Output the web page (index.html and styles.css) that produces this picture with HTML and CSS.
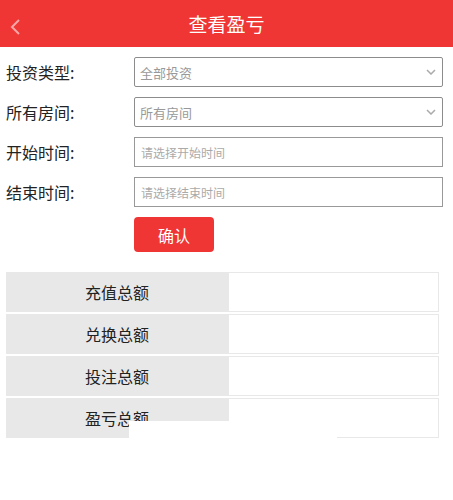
FILE: index.html
```html
<!DOCTYPE html>
<html lang="zh-CN">
<head>
  <meta charset="UTF-8">
  <meta name="viewport" content="width=device-width, initial-scale=1.0">
  <title>查看盈亏</title>
  <link rel="stylesheet" href="styles.css">
</head>
<body>

  <div class="header">
    <a class="back" href="#">
      <svg width="12" height="16" viewBox="0 0 12 16"><path d="M10 1 L3 8 L10 15" fill="none" stroke="#f7a6a6" stroke-width="2"/></svg>
    </a>
    <h1>查看盈亏</h1>
  </div>

  <form class="query-form">
    <div class="form-row">
      <label>投资类型:</label>
      <div class="select-box">
        <select>
          <option>全部投资</option>
        </select>
        <svg class="arrow" width="10" height="6" viewBox="0 0 10 6"><path d="M1 1 L5 5 L9 1" fill="none" stroke="#aaa" stroke-width="1.5"/></svg>
      </div>
    </div>
    <div class="form-row">
      <label>所有房间:</label>
      <div class="select-box">
        <select>
          <option>所有房间</option>
        </select>
        <svg class="arrow" width="10" height="6" viewBox="0 0 10 6"><path d="M1 1 L5 5 L9 1" fill="none" stroke="#aaa" stroke-width="1.5"/></svg>
      </div>
    </div>
    <div class="form-row">
      <label>开始时间:</label>
      <input type="text" placeholder="请选择开始时间">
    </div>
    <div class="form-row">
      <label>结束时间:</label>
      <input type="text" placeholder="请选择结束时间">
    </div>
    <div class="form-row btn-row">
      <label></label>
      <button type="button" class="btn-ok">确认</button>
    </div>
  </form>

  <table class="summary">
    <tr><td class="name">充值总额</td><td class="value"></td></tr>
    <tr><td class="name">兑换总额</td><td class="value"></td></tr>
    <tr><td class="name">投注总额</td><td class="value"></td></tr>
    <tr><td class="name">盈亏总额</td><td class="value"></td></tr>
  </table>

  <div class="cover"></div>

</body>
</html>
```

FILE: styles.css
```css
body {
  font-family: "Noto Sans CJK SC", "Liberation Sans", sans-serif;
  margin: 0;
  padding: 0;
  background-color: #fff;
  color: #222;
  position: relative;
  min-height: 500px;
}
.header {
  height: 47px;
  background-color: #f03535;
  display: flex;
  align-items: center;
  justify-content: center;
  position: relative;
}
.header h1 {
  margin: 0;
  font-size: 19px;
  font-weight: normal;
  color: #fff;
}
.back {
  position: absolute;
  left: 9px;
  top: 19px;
  display: flex;
}
.query-form {
  padding: 10px 0 0 0;
}
.form-row {
  display: flex;
  align-items: center;
  height: 30px;
  margin-bottom: 10px;
}
.form-row label {
  width: 134px;
  padding-left: 6px;
  box-sizing: border-box;
  font-size: 16px;
  flex-shrink: 0;
}
.select-box {
  position: relative;
  width: 309px;
  height: 30px;
}
.select-box select {
  appearance: none;
  -webkit-appearance: none;
  width: 100%;
  height: 30px;
  border: 1px solid #8c8c8c;
  border-radius: 2px;
  background: #fff;
  color: #999;
  font-family: inherit;
  font-size: 13px;
  padding: 0 5px;
  outline: none;
}
.select-box .arrow {
  position: absolute;
  right: 7px;
  top: 12px;
}
.form-row input {
  width: 309px;
  height: 30px;
  box-sizing: border-box;
  border: 1px solid #999;
  padding: 0 6px;
  font-family: inherit;
  font-size: 12px;
  outline: none;
}
.form-row input::placeholder {
  color: #aaa;
}
.btn-row {
  height: 35px;
  margin-bottom: 0;
}
.btn-ok {
  width: 80px;
  height: 35px;
  background-color: #f03535;
  color: #fff;
  border: none;
  border-radius: 4px;
  font-family: inherit;
  font-size: 16px;
  cursor: pointer;
}
.summary {
  margin: 18px 0 0 6px;
  border-collapse: separate;
  border-spacing: 0 2px;
}
.summary td {
  height: 40px;
  padding: 0;
  box-sizing: border-box;
  font-size: 16px;
}
.summary .name {
  width: 222px;
  background-color: #e8e8e8;
  text-align: center;
}
.summary .value {
  width: 211px;
  border: 1px solid #e8e8e8;
  background-color: #fff;
}
.cover {
  position: absolute;
  left: 129px;
  top: 421px;
  width: 208px;
  height: 79px;
  background-color: #fff;
}
```
